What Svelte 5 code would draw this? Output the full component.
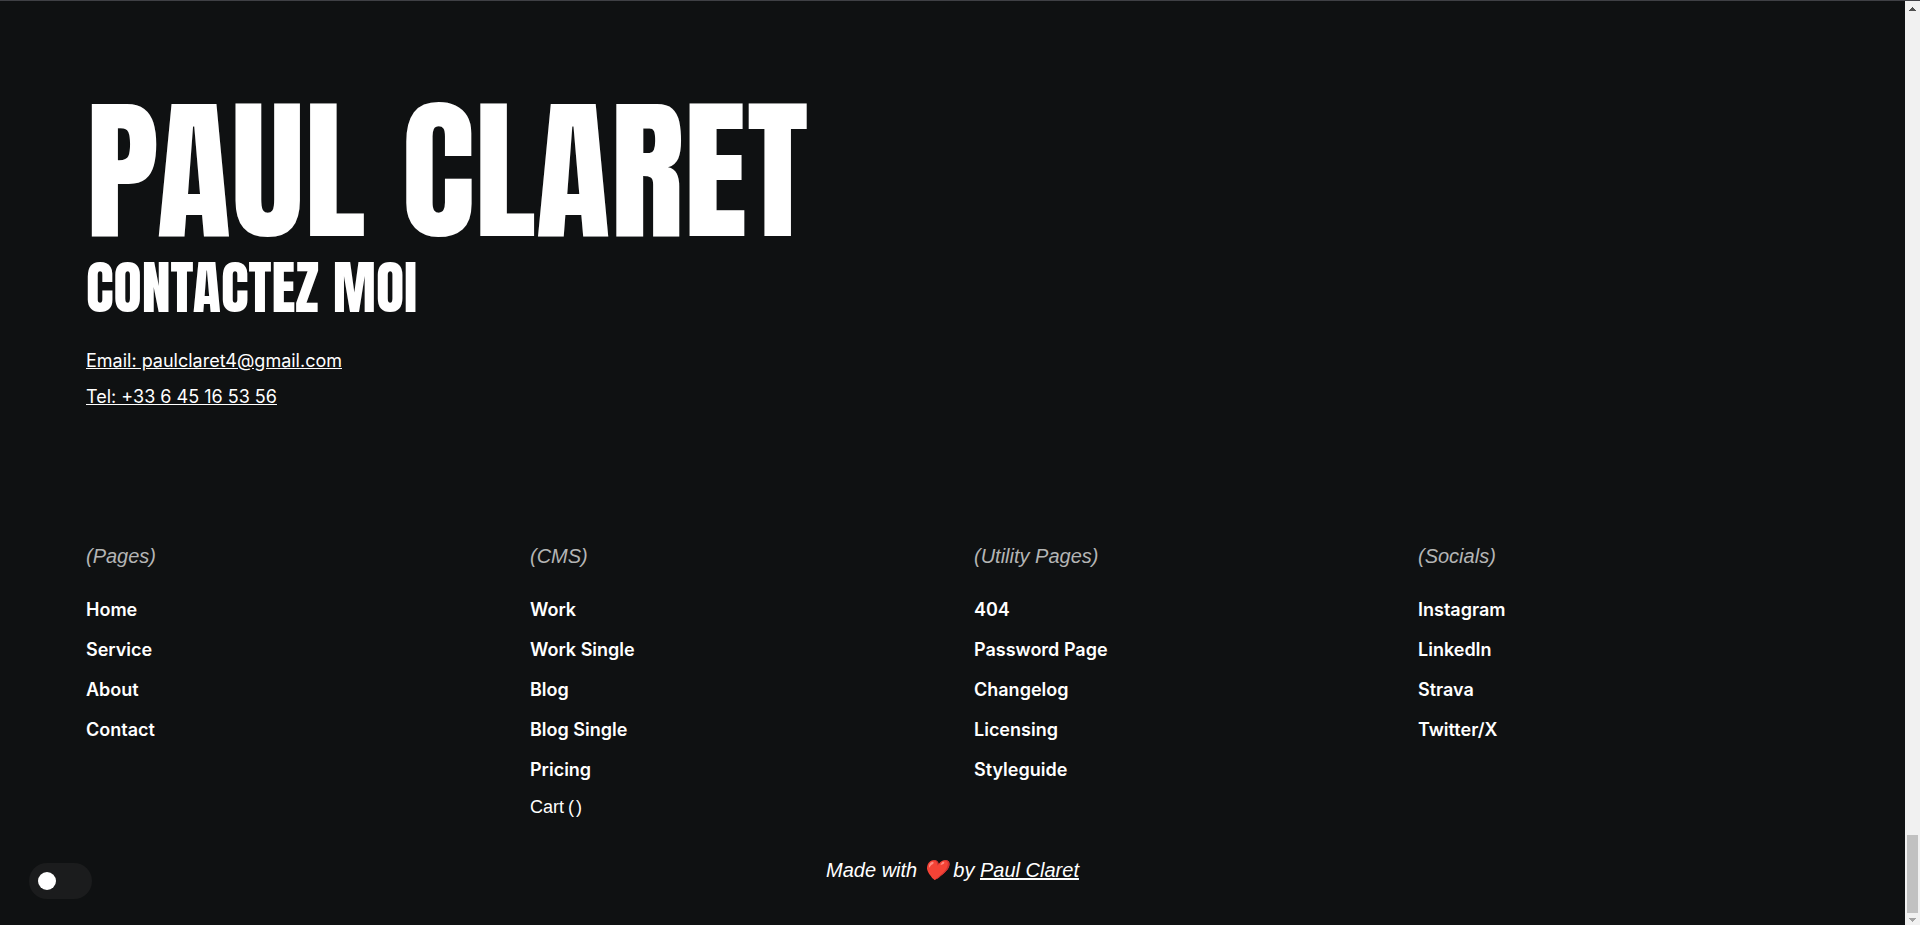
<script>
  const columns = [
    { title: '(Pages)', links: ['Home', 'Service', 'About', 'Contact'] },
    { title: '(CMS)', links: ['Work', 'Work Single', 'Blog', 'Blog Single', 'Pricing'], cart: true },
    { title: '(Utility Pages)', links: ['404', 'Password Page', 'Changelog', 'Licensing', 'Styleguide'] },
    { title: '(Socials)', links: ['Instagram', 'LinkedIn', 'Strava', 'Twitter/X'] }
  ];
  let light = $state(false);
</script>

<div class="page">
  <footer class="footer">
    <section class="intro">
      <h1>PAUL CLARET</h1>
      <h2>CONTACTEZ MOI</h2>
      <address>
        <a href="mailto:paulclaret4@gmail.com">Email: paulclaret4@gmail.com</a>
        <a href="tel:+33645165356">Tel: +33 6 45 16 53 56</a>
      </address>
    </section>

    <div class="columns">
      {#each columns as column}
        <nav>
          <h3>{column.title}</h3>
          <ul>
            {#each column.links as link}
              <li><a href="#top">{link}</a></li>
            {/each}
          </ul>
          {#if column.cart}
            <button class="cart" type="button">Cart<span class="count"><span>(</span><span>)</span></span></button>
          {/if}
        </nav>
      {/each}
    </div>

    <p class="credit">Made with ❤️ by <a href="#top">Paul Claret</a></p>

    <label class="toggle">
      <input type="checkbox" bind:checked={light} aria-label="Theme" />
    </label>
  </footer>

  <div class="scrollbar">
    <svg width="15" height="15" viewBox="0 0 15 15" shape-rendering="crispEdges"><path d="M7 6h1v1h1v1h1v1h1v1H4V9h1V8h1V7h1z" fill="#505050" /></svg>
    <div class="thumb"></div>
    <svg width="15" height="12" viewBox="0 0 15 12" shape-rendering="crispEdges"><path d="M4 5h7v1h-1v1H9v1H8v1H7V8H6V7H5V6H4z" fill="#a3a3a3" /></svg>
  </div>
</div>

<style>
  :global(body) {
    margin: 0;
    background: #0f1112;
  }
  .page {
    display: grid;
    grid-template-columns: 1fr 15px;
    min-height: 100vh;
    box-sizing: border-box;
    border-top: 1px solid #3f4045;
    color: #fff;
    background: #0f1112;
    font-family: Inter, "Liberation Sans", sans-serif;
    font-size: 18px;
  }
  .footer {
    position: relative;
    padding: 94px 86px 24px;
  }
  h1, h2, h3, p, ul {
    margin: 0;
    padding: 0;
  }
  h1, h2 {
    font-family: Anton, Impact, "Liberation Sans Narrow", sans-serif;
    font-weight: 400;
    white-space: nowrap;
  }
  h1 {
    margin-bottom: 5px;
    font-size: 154px;
    line-height: 152px;
  }
  h2 {
    font-size: 58px;
    line-height: 72px;
  }
  address {
    display: flex;
    flex-direction: column;
    align-items: flex-start;
    margin-top: 19px;
    font-style: normal;
    line-height: 36px;
  }
  a {
    color: inherit;
  }
  .columns {
    display: grid;
    grid-template-columns: repeat(4, 1fr);
    column-gap: 43px;
    margin-top: 125px;
  }
  h3 {
    color: #b4b5b5;
    font: italic 400 20px/32px "Liberation Sans", Arial, sans-serif;
  }
  ul {
    margin-top: 18px;
    list-style: none;
    font-weight: 600;
    line-height: 40px;
  }
  li a {
    text-decoration: none;
  }
  .cart {
    display: flex;
    gap: 4px;
    padding: 0;
    border: 0;
    color: inherit;
    background: none;
    font: 400 18px/34px "Liberation Sans", Arial, sans-serif;
  }
  .count {
    display: flex;
    gap: 2px;
  }
  .credit {
    margin-top: 30px;
    text-align: center;
    font: italic 400 20px/32px "Liberation Sans", Arial, sans-serif;
  }
  .toggle {
    position: absolute;
    left: 29px;
    bottom: 26px;
    display: flex;
    align-items: center;
    box-sizing: border-box;
    width: 63px;
    height: 36px;
    padding: 9px;
    border-radius: 18px;
    background: #1b1c1d;
  }
  .toggle input {
    appearance: none;
    width: 18px;
    height: 18px;
    margin: 0;
    border-radius: 50%;
    background: #fff;
  }
  .scrollbar {
    display: flex;
    flex-direction: column;
    background: #f1f1f1;
  }
  .thumb {
    width: 11px;
    height: 78px;
    margin: auto 2px 0;
    background: #c1c1c1;
  }
</style>
